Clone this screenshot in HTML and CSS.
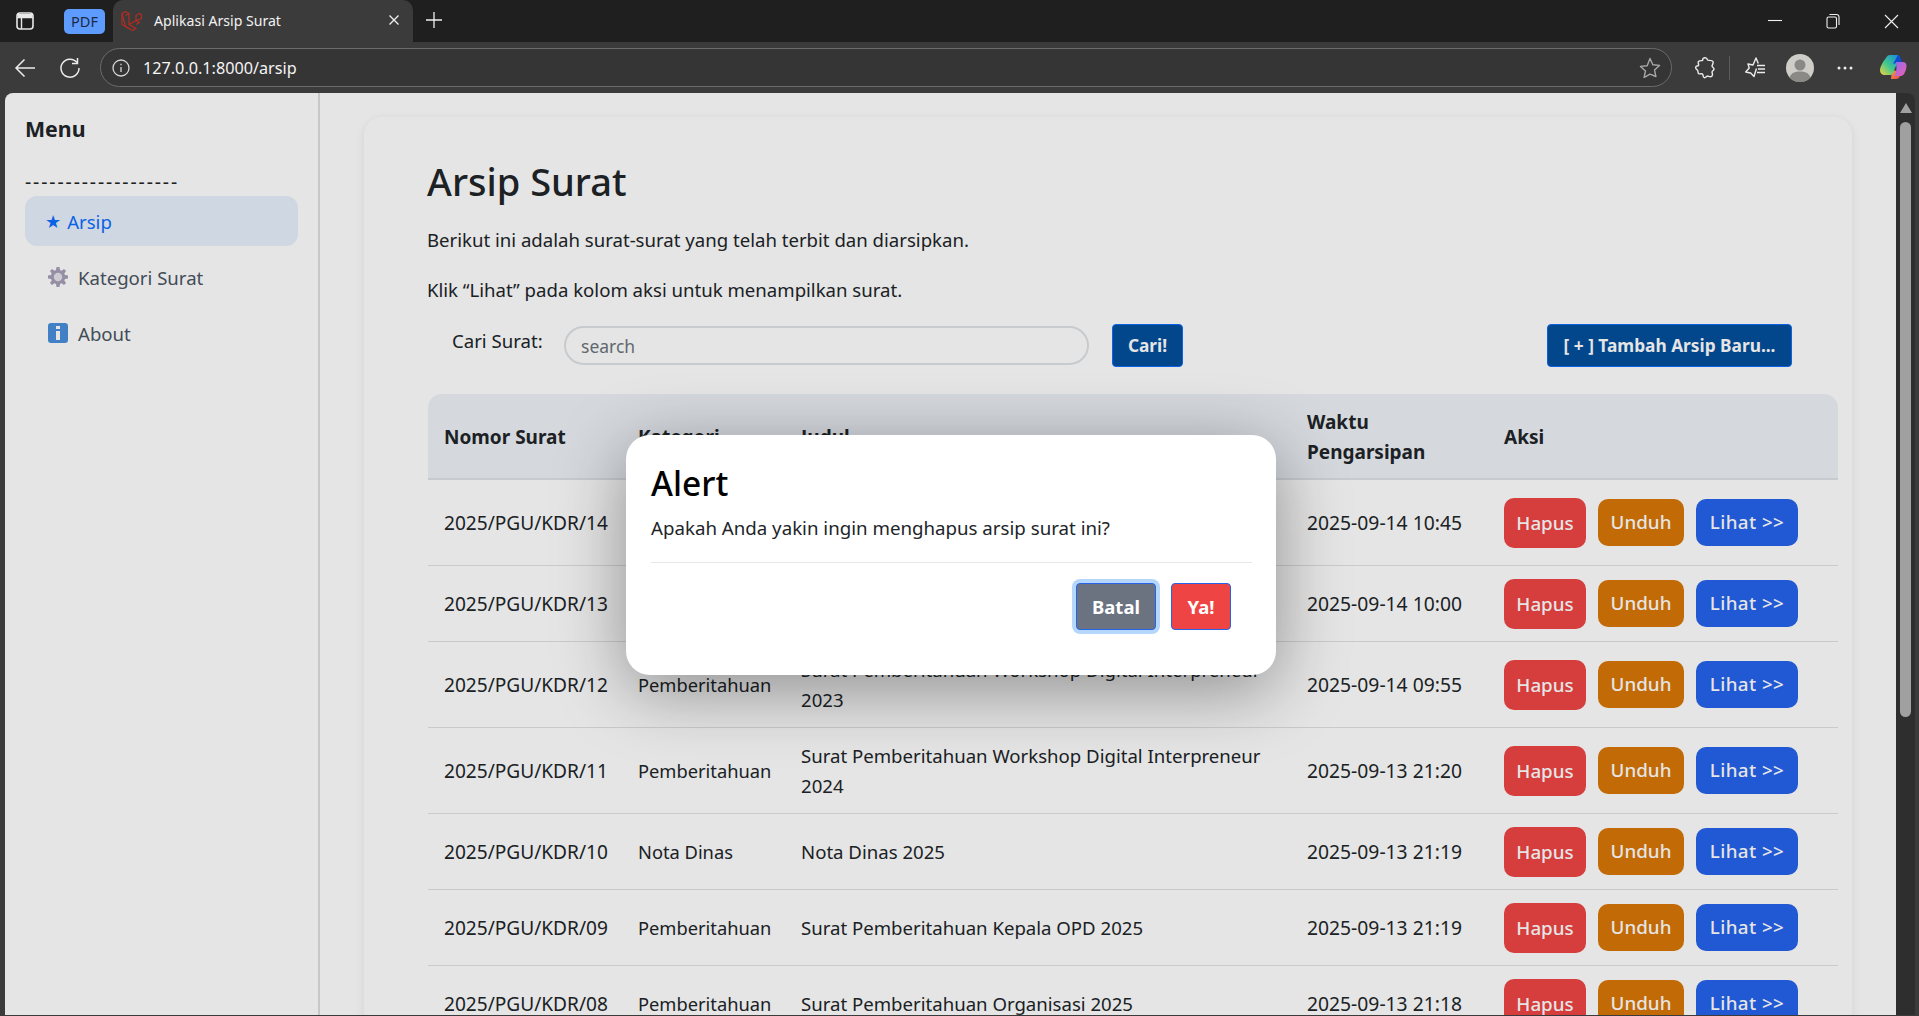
FILE: index.html
```html
<!DOCTYPE html>
<html lang="en">
<head>
	<meta charset="UTF-8">
	<title>Aplikasi Arsip Surat</title>
	<link rel="stylesheet" href="styles.css">
</head>
<body>
<div class="tabstrip">
	<svg class="ic-panel" width="18" height="18" viewBox="0 0 18 18"><rect x="1" y="1" width="16" height="16" rx="3" fill="none" stroke="#e8e8e8" stroke-width="1.6"/><path d="M1 5.500h16M5.500 5.500V17" fill="none" stroke="#e8e8e8" stroke-width="1.4"/><path d="M2 2h14v3.500H2z" fill="#e8e8e8"/></svg>
	<span class="pdf-pill">PDF</span>
	<div class="tab">
		<svg class="favicon" width="21" height="21" viewBox="0 0 21 21" fill="none" stroke="#b52c22" stroke-width="1.2" stroke-linejoin="round"><path d="M1 3.500l3.500-2 3.500 2v11l7 4-3.500 2-7-4z"/><path d="M1 3.500v11l7 4M4.500 5.500L8 3.500M8 14.500l7-4 3.500 2-3.500 2M15 5.500l3.500-2 2 1.200v4L15 10.500zM15 5.500v5M18.500 3.500L15 5.500"/></svg>
		<span class="tab-title">Aplikasi Arsip Surat</span>
		<svg class="tab-close" width="12" height="12" viewBox="0 0 12 12"><path d="M1.500 1.500l9 9M10.500 1.500l-9 9" stroke="#f0f0f0" stroke-width="1.3"/></svg>
	</div>
	<svg class="ic-plus" width="18" height="18" viewBox="0 0 18 18"><path d="M9 1v16M1 9h16" stroke="#f0f0f0" stroke-width="1.3"/></svg>
	<div class="win-btns">
		<svg width="14" height="14" viewBox="0 0 14 14"><path d="M0 6.500h14" stroke="#f0f0f0" stroke-width="1.1"/></svg>
		<svg width="14" height="16" viewBox="0 0 14 16" fill="none" stroke="#f0f0f0" stroke-width="1.1"><rect x="1" y="4" width="9.500" height="11" rx="1.500"/><path d="M3.500 1.500h7a2.500 2.500 0 0 1 2.500 2.500v8"/></svg>
		<svg width="15" height="15" viewBox="0 0 15 15"><path d="M1 1l13 13M14 1L1 14" stroke="#f0f0f0" stroke-width="1.1"/></svg>
	</div>
</div>

<div class="toolbar">
	<svg class="ic-back" width="22" height="20" viewBox="0 0 22 20" fill="none" stroke="#ececec" stroke-width="1.5"><path d="M21 10H2M10.500 1.500L2 10l8.500 8.500"/></svg>
	<svg class="ic-reload" width="22" height="22" viewBox="0 0 22 22" fill="none" stroke="#ececec" stroke-width="1.5"><path d="M18 5.500A9 9 0 1 0 20 11"/><path d="M18.500 1v5.500H13"/></svg>
	<div class="omnibox">
		<svg class="ic-info" width="18" height="18" viewBox="0 0 18 18" fill="none" stroke="#d6d6d6" stroke-width="1.3"><circle cx="9" cy="9" r="8"/><path d="M9 8v5M9 4.800v1.500"/></svg>
		<span class="url">127.0.0.1:8000/arsip</span>
		<svg class="ic-star" width="22" height="21" viewBox="0 0 22 21" fill="none" stroke="#a8a8a8" stroke-width="1.4" stroke-linejoin="round"><path d="M11 1.500l2.800 6.200 6.700.7-5 4.500 1.400 6.600L11 17.100l-5.900 3.400 1.400-6.600-5-4.500 6.700-.7z"/></svg>
	</div>
	<div class="tools">
		<svg width="20" height="24" viewBox="0 0 20 24" fill="none" stroke="#ececec" stroke-width="1.4" stroke-linejoin="round"><path d="M8 2.500c2-1.500 4-.5 4.500 1.500.5 1 4.500-.5 5.500 1.500.8 1.500-1 4-1 4.500 0 1 2 1.500 2 3 0 1.500-2 2-2 3s1.500 3-.5 4.500c-1.500 1-3-.5-4-.5s-2 2.500-3.500 1.500c-1.500-1-.5-2.500-1.500-3.500-1-.8-3 .5-4-.5-.8-1-.3-3-1-3.500C1 13 0 13 1 10.500c.5-1 2 0 2.500-1C4 8 2.500 6.500 3.500 5.500 5 4 7 5 7.500 4.500z"/></svg>
		<i class="tools-sep"></i>
		<svg width="22" height="24" viewBox="0 0 22 24" fill="none" stroke="#ececec" stroke-width="1.4" stroke-linejoin="round"><path d="M12.500 12.500l-1 3-1.500 5-3.300-3.500-5-1 3.500-4L4 8l5 1 3-7 2.300 5.500"/><path d="M13 9.500h8M14 13h7M13 16.500h8"/></svg>
		<svg class="avatar" width="28" height="28" viewBox="0 0 28 28"><circle cx="14" cy="14" r="14" fill="#cfcdc8"/><circle cx="14" cy="11" r="5.500" fill="#8a8986"/><path d="M3.500 23.500C5 19 9 17.500 14 17.500s9 1.500 10.500 6A14 14 0 0 1 3.500 23.500z" fill="#8a8986"/></svg>
		<svg class="dots" width="16" height="4" viewBox="0 0 16 4"><circle cx="2" cy="2" r="1.500" fill="#ececec"/><circle cx="8" cy="2" r="1.500" fill="#ececec"/><circle cx="14" cy="2" r="1.500" fill="#ececec"/></svg>
		<svg class="copilot" width="28" height="28" viewBox="0 0 28 28">
			<defs>
				<linearGradient id="cpA" x1="0" y1="1" x2="1" y2="0"><stop offset="0" stop-color="#f5d33f"/><stop offset=".45" stop-color="#3fc98c"/><stop offset="1" stop-color="#1583e8"/></linearGradient>
				<linearGradient id="cpB" x1="0" y1="0" x2="1" y2="1"><stop offset="0" stop-color="#8f6bf0"/><stop offset="1" stop-color="#ef5fb0"/></linearGradient>
				<linearGradient id="cpC" x1="0" y1="0" x2="1" y2="1"><stop offset="0" stop-color="#f8a33c"/><stop offset="1" stop-color="#ea3f5a"/></linearGradient>
			</defs>
			<path d="M12 25h5c2 0 3.500-1 4-3l1-4-9-2z" fill="url(#cpC)"/>
			<path d="M7 4c1-2 2-3 4-3h7c1.500 0 2.500 1 3 3l-5 10c-1 3-2 6-4 7H6c-3 0-5-2-5-5 0-3 2-6 3-8z" fill="url(#cpA)"/>
			<path d="M19 1c1.500.500 2.500 2 3 4l1 4h-6l-3 1z" fill="#0f4bd0"/>
			<path d="M17 8h7c2 0 3.500 1.500 3.500 3.500 0 3-1 6-2.500 8.500-1 1.500-2.500 2-4 2h-6c2-1.500 2-4 2.500-8z" fill="url(#cpB)"/>
		</svg>
	</div>
</div>

<div class="frame">
	<div class="page">
		<aside class="sidebar">
			<h2 class="side-title">Menu</h2>
			<div class="side-dash">-------------------</div>
			<a class="side-link active"><span class="star">★</span><span class="side-label">Arsip</span></a>
			<a class="side-link">
				<svg class="side-ic" width="20" height="20" viewBox="0 0 20 20"><path d="M8.500 0h3l.5 3 1.600.7L16 2l2 2-1.700 2.400.7 1.600 3 .5v3l-3 .5-.7 1.600L18 16l-2 2-2.400-1.700-1.600.7-.5 3h-3l-.5-3-1.600-.7L4 18l-2-2 1.700-2.400L3 12l-3-.5v-3L3 8l.7-1.600L2 4l2-2 2.400 1.700L8 3z" fill="#a79fb8"/><circle cx="10" cy="10" r="4.200" fill="#e6e3ea"/></svg>
				Kategori Surat
			</a>
			<a class="side-link">
				<svg class="side-ic" width="20" height="20" viewBox="0 0 20 20"><rect width="20" height="20" rx="3" fill="#4a8fdc"/><rect x="8" y="3" width="4" height="3" fill="#fff"/><rect x="8" y="8" width="4" height="9" fill="#fff"/></svg>
				About
			</a>
		</aside>

		<main class="content">
			<section class="card">
				<h1 class="title">Arsip Surat</h1>
				<p class="lead">Berikut ini adalah surat-surat yang telah terbit dan diarsipkan.</p>
				<p class="lead">Klik “Lihat” pada kolom aksi untuk menampilkan surat.</p>

				<div class="searchbar">
					<label class="search-label">Cari Surat:</label>
					<input class="search-input" type="text" placeholder="search">
					<button class="btn-navy btn-cari">Cari!</button>
					<button class="btn-navy btn-tambah">[ + ] Tambah Arsip Baru...</button>
				</div>

				<table class="arsip">
					<thead>
						<tr><th class="c1">Nomor Surat</th><th class="c2">Kategori</th><th class="c3">Judul</th><th class="c4">Waktu Pengarsipan</th><th class="c5">Aksi</th></tr>
					</thead>
					<tbody>
						<tr><td>2025/PGU/KDR/14</td><td>Undangan</td><td>Surat Undangan Rapat Koordinasi Kepala Dinas Kabupaten Kediri 2025</td><td>2025-09-14 10:45</td><td class="aksi"><a class="act hapus">Hapus</a><a class="act unduh">Unduh</a><a class="act lihat">Lihat &gt;&gt;</a></td></tr>
						<tr><td>2025/PGU/KDR/13</td><td>Undangan</td><td>Surat Undangan Rapat 2025</td><td>2025-09-14 10:00</td><td class="aksi"><a class="act hapus">Hapus</a><a class="act unduh">Unduh</a><a class="act lihat">Lihat &gt;&gt;</a></td></tr>
						<tr><td>2025/PGU/KDR/12</td><td>Pemberitahuan</td><td>Surat Pemberitahuan Workshop Digital Interpreneur 2023</td><td>2025-09-14 09:55</td><td class="aksi"><a class="act hapus">Hapus</a><a class="act unduh">Unduh</a><a class="act lihat">Lihat &gt;&gt;</a></td></tr>
						<tr><td>2025/PGU/KDR/11</td><td>Pemberitahuan</td><td>Surat Pemberitahuan Workshop Digital Interpreneur 2024</td><td>2025-09-13 21:20</td><td class="aksi"><a class="act hapus">Hapus</a><a class="act unduh">Unduh</a><a class="act lihat">Lihat &gt;&gt;</a></td></tr>
						<tr><td>2025/PGU/KDR/10</td><td>Nota Dinas</td><td>Nota Dinas 2025</td><td>2025-09-13 21:19</td><td class="aksi"><a class="act hapus">Hapus</a><a class="act unduh">Unduh</a><a class="act lihat">Lihat &gt;&gt;</a></td></tr>
						<tr><td>2025/PGU/KDR/09</td><td>Pemberitahuan</td><td>Surat Pemberitahuan Kepala OPD 2025</td><td>2025-09-13 21:19</td><td class="aksi"><a class="act hapus">Hapus</a><a class="act unduh">Unduh</a><a class="act lihat">Lihat &gt;&gt;</a></td></tr>
						<tr><td>2025/PGU/KDR/08</td><td>Pemberitahuan</td><td>Surat Pemberitahuan Organisasi 2025</td><td>2025-09-13 21:18</td><td class="aksi"><a class="act hapus">Hapus</a><a class="act unduh">Unduh</a><a class="act lihat">Lihat &gt;&gt;</a></td></tr>
					</tbody>
				</table>
			</section>
		</main>

		<div class="overlay">
			<div class="modal">
				<h2 class="modal-title">Alert</h2>
				<p class="modal-text">Apakah Anda yakin ingin menghapus arsip surat ini?</p>
				<hr class="modal-line">
				<div class="modal-actions">
					<button class="m-btn batal">Batal</button>
					<button class="m-btn ya">Ya!</button>
				</div>
			</div>
		</div>
	</div>
	<div class="scrolltrack">
		<svg class="scroll-up" width="12" height="10" viewBox="0 0 12 10"><path d="M6 0l6 10H0z" fill="#a0a0a0"/></svg>
		<div class="scroll-thumb"></div>
	</div>
</div>
</body>
</html>
```

FILE: styles.css
```css
html,body{
    margin: 0;
    padding: 0;
    height: 100%;
    overflow: hidden;
    background: #3b3b3b;
    font-family: "Noto Sans", "Liberation Sans", sans-serif;
    color: #212529;
}
body{
    display: flex;
    flex-direction: column;
}

/* browser chrome */
.tabstrip{
    height: 42px;
    flex: none;
    display: flex;
    align-items: flex-start;
    background: #1f1f1f;
}
.ic-panel{
    margin: 12px 0 0 16px;
    flex: none;
}
.pdf-pill{
    margin: 9px 0 0 30px;
    width: 41px;
    height: 25px;
    line-height: 25px;
    border-radius: 5px;
    background: #5e9bff;
    color: #1b2a44;
    font-size: 14.5px;
    text-align: center;
    flex: none;
}
.tab{
    margin-left: 8px;
    width: 300px;
    height: 42px;
    box-sizing: border-box;
    padding: 0 13px 2px 8px;
    display: flex;
    align-items: center;
    background: #3b3b3b;
    border-radius: 10px 10px 0 0;
    flex: none;
}
.favicon{
    flex: none;
}
.tab-title{
    margin-left: 12px;
    font-size: 14.1px;
    color: #f2f2f2;
    flex: 1;
}
.ic-plus{
    margin: 11px 0 0 12px;
    flex: none;
}
.win-btns{
    margin-left: auto;
    width: 151px;
    padding: 13px 20px 0 0;
    box-sizing: border-box;
    display: flex;
    justify-content: space-between;
    align-items: center;
    flex: none;
}
.toolbar{
    height: 51px;
    flex: none;
    display: flex;
    align-items: center;
    background: #3b3b3b;
}
.ic-back{
    margin-left: 14px;
    flex: none;
}
.ic-reload{
    margin-left: 23px;
    flex: none;
}
.omnibox{
    margin-left: 19px;
    width: 1572px;
    height: 39px;
    box-sizing: border-box;
    display: flex;
    align-items: center;
    padding: 0 10px 0 11px;
    background: #353535;
    border: 1px solid #6b6b6b;
    border-radius: 20px;
    flex: none;
}
.url{
    margin-left: 13px;
    font-size: 16.2px;
    color: #f4f4f4;
    flex: 1;
}
.tools{
    flex: 1;
    display: flex;
    align-items: center;
    padding-left: 23px;
}
.tools-sep{
    width: 1px;
    height: 24px;
    margin: 0 14px 0 14px;
    background: #5c5c5c;
}
.avatar{
    margin-left: 20px;
}
.dots{
    margin-left: 23px;
}
.copilot{
    margin-left: 26px;
}

/* page area */
.frame{
    flex: 1;
    min-height: 0;
    display: flex;
    padding: 0 4px 1px 5px;
}
.page{
    position: relative;
    width: 1891px;
    display: flex;
    overflow: hidden;
    background: #fff;
    border-radius: 8px 0 0 0;
    flex: none;
}
.scrolltrack{
    flex: 1;
    display: flex;
    flex-direction: column;
    align-items: center;
    background: #2e2e2e;
    border-radius: 0 8px 0 0;
}
.scroll-up{
    margin-top: 10px;
}
.scroll-thumb{
    margin-top: 9px;
    width: 11px;
    height: 595px;
    border-radius: 6px;
    background: #a0a0a0;
}

/* sidebar */
.sidebar{
    width: 315px;
    box-sizing: border-box;
    padding: 20px 20px 0 20px;
    border-right: 2px solid #dcdfe3;
    flex: none;
}
.side-title{
    margin: 0;
    font-size: 21.3px;
    line-height: 32px;
    font-weight: 700;
}
.side-dash{
    margin-top: 25px;
    font-size: 19.3px;
    line-height: 24px;
    letter-spacing: 1.9px;
    white-space: nowrap;
}
.side-link{
    display: flex;
    align-items: center;
    width: 273px;
    height: 50px;
    box-sizing: border-box;
    padding: 0 23px;
    margin-bottom: 6px;
    border-radius: 12px;
    font-size: 18.6px;
    color: #4b5563;
}
.side-link.active{
    padding-left: 20px;
    background: #e7f0fd;
    color: #0d6efd;
    margin-top: 2px;
}
.star{
    font-family: "DejaVu Sans", sans-serif;
    font-size: 18px;
}
.side-label{
    margin-left: 6px;
}
.side-ic{
    margin-right: 10px;
    flex: none;
}

/* main */
.content{
    flex: 1;
    padding: 24px 44px 0 44px;
    min-width: 0;
}
.card{
    height: 1400px;
    box-sizing: border-box;
    padding: 36px 14px 0 63px;
    background: #fff;
    border-radius: 18px;
    box-shadow: 0 2px 10px rgba(0,0,0,.08);
}
.title{
    margin: 0 0 16px 0;
    font-size: 38px;
    line-height: 56px;
    font-weight: 500;
}
.lead{
    margin: 0 0 20px 0;
    font-size: 18.6px;
    line-height: 30px;
}
.searchbar{
    display: flex;
    align-items: flex-start;
    height: 43px;
    margin-top: -1px;
    margin-bottom: 27px;
}
.search-label{
    margin: 2px 0 0 25px;
    width: 112px;
    font-size: 18.6px;
    line-height: 30px;
    flex: none;
}
.search-input{
    margin-top: 2px;
    width: 525px;
    height: 39px;
    box-sizing: border-box;
    padding: 0 15px;
    border: 2px solid #dee2e6;
    border-radius: 20px;
    background: #fff;
    font-family: inherit;
    font-size: 17.5px;
    flex: none;
}
.search-input::placeholder{
    color: #6c757d;
}
.btn-navy{
    height: 43px;
    box-sizing: border-box;
    background: #034e9c;
    color: #fff;
    border: 1px solid #0d6efd;
    border-radius: 4px;
    font-family: inherit;
    font-size: 17.3px;
    font-weight: 700;
    flex: none;
}
.btn-cari{
    margin-left: 23px;
    width: 71px;
    padding: 0;
}
.btn-tambah{
    margin-left: 364px;
    width: 245px;
    padding: 0;
}

/* table */
.arsip{
    width: 1410px;
    margin-left: 1px;
    border-collapse: separate;
    border-spacing: 0;
    table-layout: fixed;
    font-size: 18.6px;
    line-height: 30px;
}
.c1{ width: 194px; }
.c2{ width: 163px; }
.c3{ width: 506px; }
.c4{ width: 197px; }
.arsip th,.arsip td{
    padding: 12.5px 16px;
    text-align: left;
    border-bottom: 1px solid #dee2e6;
    box-sizing: border-box;
}
.arsip td:nth-child(1){
    font-size: 19.1px;
}
.arsip td:nth-child(4){
    font-size: 19.3px;
}
.arsip td:nth-child(2){
    font-size: 18.3px;
}
.arsip th{
    padding: 13px 16px 11px;
    background: #eef1f6;
    font-weight: 700;
    font-size: 19px;
    border-bottom-width: 2px;
}
.arsip th:first-child{ border-top-left-radius: 14px; }
.arsip th:last-child{ border-top-right-radius: 14px; }
.arsip td.aksi{
    white-space: nowrap;
    font-size: 0;
}
.act{
    display: inline-block;
    vertical-align: middle;
    height: 47px;
    line-height: 47px;
    box-sizing: border-box;
    margin-right: 12px;
    border-radius: 10px;
    text-align: center;
    color: #fff;
    font-size: 18.8px;
    font-weight: 500;
}
.hapus{
    width: 82px;
    height: 50px;
    line-height: 50px;
    background: #ef4444;
}
.unduh{
    width: 86px;
    background: #d97706;
}
.lihat{
    width: 102px;
    background: #2563eb;
    letter-spacing: .4px;
}

/* modal layer */
.overlay{
    position: absolute;
    inset: 0;
    background: rgba(0,0,0,.1);
}
.modal{
    position: absolute;
    left: 621px;
    top: 342px;
    width: 650px;
    height: 240px;
    box-sizing: border-box;
    padding: 20px 24px 0 25px;
    background: #fff;
    color: #000;
    border-radius: 24px;
    box-shadow: 0 15px 70px rgba(0,0,0,.38);
}
.modal-title{
    margin: 0;
    font-size: 33.5px;
    line-height: 56px;
    font-weight: 500;
}
.modal-text{
    margin: 2px 0 0 0;
    font-size: 18.7px;
    line-height: 30px;
    color: #212529;
}
.modal-line{
    margin: 19px 0 0 0;
    border: 0;
    border-top: 1px solid #e5e7eb;
}
.modal-actions{
    margin-top: 20px;
    padding-right: 21px;
    display: flex;
    justify-content: flex-end;
    gap: 15px;
}
.m-btn{
    height: 47px;
    box-sizing: border-box;
    padding: 0;
    color: #fff;
    border: 1px solid #2563eb;
    border-radius: 4px;
    font-family: inherit;
    font-size: 18.5px;
    font-weight: 700;
}
.batal{
    width: 80px;
    background: #6b7280;
    box-shadow: 0 0 0 4px #b6d7fc;
}
.ya{
    width: 60px;
    background: #ef4444;
}
```
